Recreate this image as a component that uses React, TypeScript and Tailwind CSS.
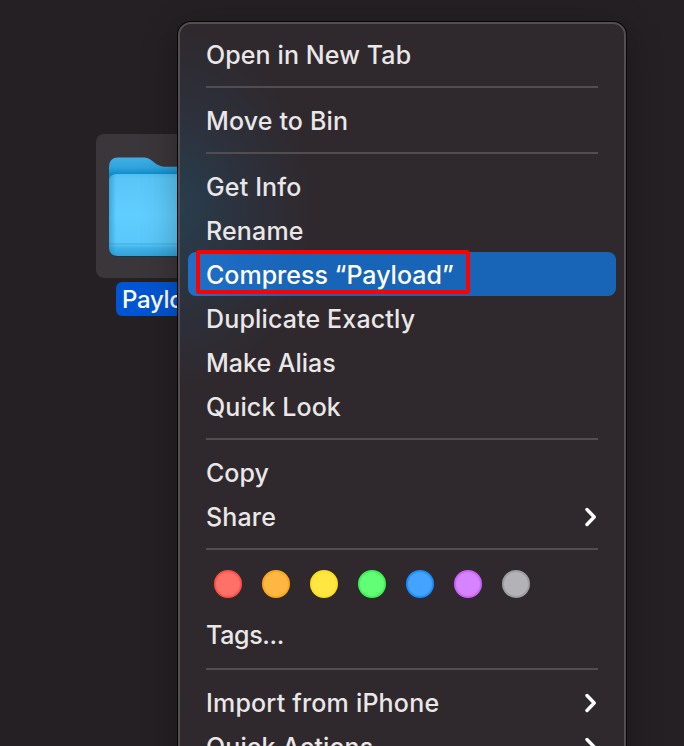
import React from "react";

function Separator({ tall = false }: { tall?: boolean }) {
  return (
    <div className={`${tall ? "h-6 pt-0.5" : "h-[22px]"} flex shrink-0 items-center px-[26px]`}>
      <div className="h-0.5 w-full bg-[#524d50]" />
    </div>
  );
}

function Chevron() {
  return (
    <svg className="mr-px mt-0.5 h-5 w-3" viewBox="0 0 12 20" fill="none">
      <path d="M2 2.500 L9.200 10 L2 17.500" stroke="#fff" strokeWidth="3.4" strokeLinecap="round" strokeLinejoin="round" />
    </svg>
  );
}

type ItemProps = { label: string; tracking: string; submenu?: boolean; selected?: boolean };

function Item({ label, tracking, submenu, selected }: ItemProps) {
  return (
    <div
      className={`relative mx-2 flex h-11 shrink-0 items-center justify-between rounded-lg px-[18px] text-[25px] leading-[44px] ${
        selected ? "bg-linear-to-r from-[#206fc8] to-[#1865b7] to-25% text-white" : "text-[#e9e7e8]"
      }`}
    >
      <span className={`whitespace-nowrap pt-0.5 font-[480] ${tracking}`}>{label}</span>
      {submenu && <Chevron />}
      {selected && <div className="absolute -top-0.5 left-2 h-11 w-[274px] rounded-[3px] border-4 border-[#fe0000]" />}
    </div>
  );
}

const tags = [
  "bg-[#ff7067] border-[#ff5147]",
  "bg-[#ffb743] border-[#ffa51b]",
  "bg-[#ffe642] border-[#ffde1c]",
  "bg-[#62ff76] border-[#3cf656]",
  "bg-[#43a3ff] border-[#1b8dff]",
  "bg-[#d783ff] border-[#cb63fa]",
  "bg-[#b3b2b6] border-[#9e9da1]",
];

function Folder() {
  return (
    <svg className="h-[104px] w-[120px]" viewBox="0 0 120 104">
      <defs>
        <linearGradient id="back" x1="0" y1="0" x2="0" y2="1">
          <stop offset="0" stopColor="#3fb0e6" />
          <stop offset="0.1" stopColor="#31a3dc" />
          <stop offset="0.18" stopColor="#088bcb" />
        </linearGradient>
        <linearGradient id="front" x1="0" y1="0" x2="0" y2="1">
          <stop offset="0" stopColor="#54bdf0" />
          <stop offset="0.06" stopColor="#5ac6f8" />
          <stop offset="0.5" stopColor="#60ceff" />
          <stop offset="0.84" stopColor="#5ac7fa" />
          <stop offset="0.85" stopColor="#46b3e8" />
          <stop offset="0.87" stopColor="#53c0f4" />
          <stop offset="0.9" stopColor="#43b2e8" />
          <stop offset="1" stopColor="#30a1d9" />
        </linearGradient>
        <linearGradient id="edge" x1="0" y1="0" x2="1" y2="0">
          <stop offset="0" stopColor="#1684bc" stopOpacity="0.5" />
          <stop offset="0.06" stopColor="#1684bc" stopOpacity="0" />
        </linearGradient>
      </defs>
      <path d="M1 92 V12 Q1 3 10 3 H33 C42 3 43 12 55 12 H110 Q119 12 119 21 V92 Q119 102 110 102 H10 Q1 102 1 92Z" fill="#17384a" />
      <path d="M1 90 V12 Q1 2.500 10 2.500 H35 C46 2.500 45 11.800 59 11.800 H110 Q119 12 119 21 V90 Q119 100 110 100 H10 Q1 100 1 90Z" fill="url(#back)" />
      <path d="M1 92 V27 Q1 19 9 19 H111 Q119 19 119 27 V92 Q119 101 110 101 H10 Q1 101 1 92Z" fill="url(#front)" />
      <path d="M1 92 V27 Q1 19 9 19 H111 Q119 19 119 27 V92 Q119 101 110 101 H10 Q1 101 1 92Z" fill="url(#edge)" />
    </svg>
  );
}

export default function App() {
  return (
    <div className="relative h-[746px] w-[684px] overflow-hidden bg-[#252023] pl-24 pt-[134px] font-['Inter','Liberation_Sans',sans-serif]">
      <div className="flex w-36 flex-col items-center gap-1">
        <div className="flex h-36 w-36 justify-center rounded-lg bg-[#3b3639] pt-[21px]">
          <Folder />
        </div>
        <div className="h-[34px] w-[104px] whitespace-nowrap rounded-md bg-[#0055d2] pl-1.5 text-[24px] font-[480] leading-[35px] tracking-[-0.3px] text-white">
          Payload
        </div>
      </div>

      <div className="absolute left-[178px] top-[22px] flex h-[800px] w-[448px] flex-col rounded-[13px] border-2 border-[#524e51] bg-[#2f282c] bg-[radial-gradient(ellipse_150px_190px_at_-10px_185px,#293e50_0%,#2a3947_22%,#2d303a_55%,#2f282c_100%)] pt-2 shadow-[0_0_0_1px_#080708,0_8px_36px_rgba(0,0,0,0.3)]">
        <Item label="Open in New Tab" tracking="tracking-[0.1px]" />
        <Separator />
        <Item label="Move to Bin" tracking="tracking-[0.15px]" />
        <Separator />
        <Item label="Get Info" tracking="tracking-[0.15px]" />
        <Item label="Rename" tracking="tracking-[0.15px]" />
        <Item label="Compress “Payload”" tracking="tracking-[0px]" selected />
        <Item label="Duplicate Exactly" tracking="tracking-[0.15px]" />
        <Item label="Make Alias" tracking="tracking-[0px]" />
        <Item label="Quick Look" tracking="tracking-[0.1px]" />
        <Separator />
        <Item label="Copy" tracking="tracking-[0px]" />
        <Item label="Share" tracking="tracking-[0.15px]" submenu />
        <Separator />
        <div className="flex h-[52px] shrink-0 gap-5 pl-[34px] pt-2.5">
          {tags.map((tag) => (
            <div key={tag} className={`size-7 rounded-full border-2 ${tag}`} />
          ))}
        </div>
        <Item label="Tags..." tracking="tracking-[-0.35px]" />
        <Separator tall />
        <Item label="Import from iPhone" tracking="tracking-[0.2px]" submenu />
        <Item label="Quick Actions" tracking="tracking-[0.1px]" submenu />
      </div>
    </div>
  );
}
